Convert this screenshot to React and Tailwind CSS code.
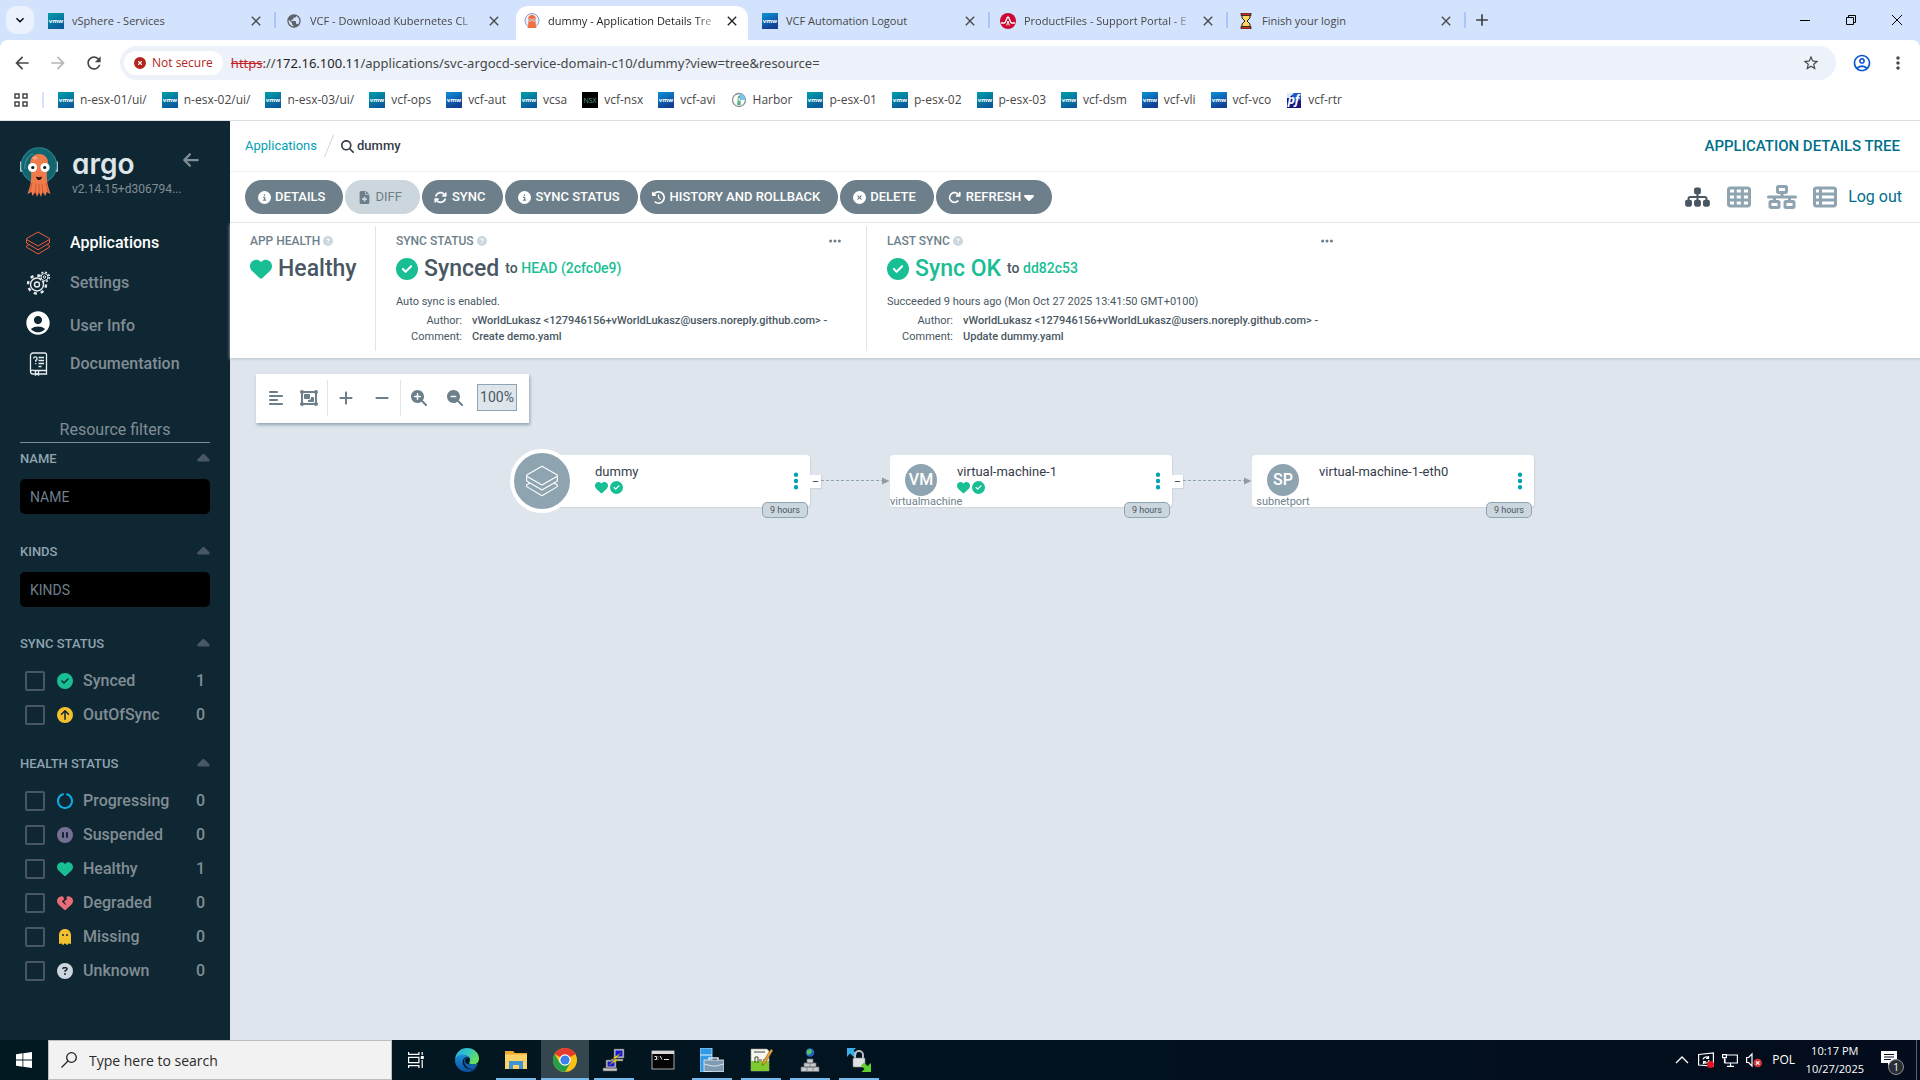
import React from "react";
import {
  FaAlignLeft,
  FaArrowLeft,
  FaArrowRotateRight,
  FaArrowsRotate,
  FaCaretDown,
  FaCaretUp,
  FaCircleArrowUp,
  FaCircleCheck,
  FaCircleInfo,
  FaCircleNotch,
  FaCirclePause,
  FaCircleQuestion,
  FaCircleXmark,
  FaClockRotateLeft,
  FaEllipsis,
  FaEllipsisVertical,
  FaFileMedical,
  FaGhost,
  FaHeart,
  FaHeartCrack,
  FaMagnifyingGlass,
  FaMagnifyingGlassMinus,
  FaMagnifyingGlassPlus,
  FaMinus,
  FaNetworkWired,
  FaObjectGroup,
  FaPlus,
  FaSitemap,
  FaTableCells,
  FaTableList,
} from "react-icons/fa6";
import {
  MdAccountCircle,
  MdAdd,
  MdArrowBack,
  MdArrowForward,
  MdClose,
  MdKeyboardArrowDown,
  MdMoreVert,
  MdOutlineAccountCircle,
  MdPublic,
  MdRefresh,
  MdStarOutline,
} from "react-icons/md";

const VmwIcon = ({ from = "#00a0a8", to = "#0a5c9c" }) => (
  <svg className="w-4 h-4 shrink-0" viewBox="0 0 16 16" aria-hidden="true">
    <defs>
      <linearGradient id={`vmw${from.slice(1)}`} x1="0" y1="0" x2="0.4" y2="1">
        <stop offset="0" stopColor={from} />
        <stop offset="1" stopColor={to} />
      </linearGradient>
    </defs>
    <rect width="16" height="16" fill={`url(#vmw${from.slice(1)})`} />
    <text x="8" y="10" textAnchor="middle" fontSize="6" fontWeight="700" fill="#fff" fontFamily="Open Sans, sans-serif">
      vmw
    </text>
  </svg>
);

const VmwBlue = () => <VmwIcon from="#0b93d8" to="#123f93" />;

const NsxIcon = () => (
  <svg className="w-4 h-4 shrink-0" viewBox="0 0 16 16" aria-hidden="true">
    <rect width="16" height="16" fill="#000" />
    <text x="8" y="11" textAnchor="middle" fontSize="7" fill="#5f9f8c" fontFamily="Open Sans, sans-serif">
      NSX
    </text>
  </svg>
);

const HarborIcon = () => (
  <svg className="w-4 h-4 shrink-0" viewBox="0 0 16 16" aria-hidden="true">
    <circle cx="8" cy="8" r="6.5" fill="#fff" stroke="#8a8f94" strokeWidth="1.3" />
    <path d="M8 1.5a6.5 6.5 0 0 1 6.5 6.5L8 8z" fill="#7cc4ee" />
    <path d="M7 4h2l1 9H6z" fill="#5fb58a" />
    <path d="M7.5 6.5h1.5v2H7.5z" fill="#fff" />
  </svg>
);

const PfIcon = () => (
  <svg className="w-4 h-4 shrink-0" viewBox="0 0 16 16" aria-hidden="true">
    <rect x="1" y="1" width="14" height="15" fill="#17177f" />
    <path d="M6 1h9v7l-9 3z" fill="#1f56c4" />
    <path d="M1 1h7L3 6H1z" fill="#dfe6f5" />
    <text x="7.5" y="12" textAnchor="middle" fontSize="12" fontWeight="700" fontStyle="italic" fill="#fff" fontFamily="Open Sans, sans-serif">
      pf
    </text>
  </svg>
);

const Octopus = ({ className }) => (
  <svg className={className} viewBox="0 0 38 50" aria-hidden="true">
    <rect x="0" y="14" width="4" height="11" rx="1.5" fill="#b7cbd9" />
    <rect x="34" y="14" width="4" height="11" rx="1.5" fill="#b7cbd9" />
    <circle cx="19" cy="18.5" r="17.6" fill="#10656f" stroke="#2a7e88" strokeWidth="1.2" />
    <path d="M5 22c-1-8 4-14 8-15" fill="none" stroke="#4b9aa1" strokeWidth="1" />
    <path
      d="M19 7c-7 0-9.500 6-8.500 12 .6 4 1 8 .5 14-.3 5-2 9-3.500 14l4-2 1 4 3-4 1.500 5 2-5 2 5 1.500-5 3 4 1-4 4 2c-1.500-5-3.200-9-3.500-14-.5-6-.1-10 .5-14C29.500 13 26 7 19 7z"
      fill="#ef7b4d"
    />
    <path d="M12 36l-2 9M16 37l-1 9M19 37v10M22 37l1 9M26 36l2 9" stroke="#d6562e" strokeWidth="1" fill="none" />
    <ellipse cx="15" cy="11" rx="2.500" ry="1.500" fill="#f8a585" />
    <circle cx="12.500" cy="20.500" r="4.600" fill="#fff" />
    <circle cx="25" cy="20.500" r="4.600" fill="#fff" />
    <circle cx="12.800" cy="20.500" r="1.600" fill="#0e1b22" />
    <circle cx="24.700" cy="20.500" r="1.600" fill="#0e1b22" />
    <path d="M16 29.500q3 1.600 6 0q-.6 3.600-3 3.600t-3-3.600z" fill="#2b0f0a" />
  </svg>
);

const ArgoFavicon = () => (
  <svg className="w-4 h-4 shrink-0" viewBox="0 0 16 16" aria-hidden="true">
    <circle cx="8" cy="7.500" r="7" fill="#eef1fa" stroke="#8d97c9" strokeWidth="1" />
    <path d="M8 2c-3 0-4.200 2.500-3.800 5 .3 2 .2 5-.7 8h9c-.9-3-1-6-.7-8C12.200 4.500 11 2 8 2z" fill="#ef6f42" />
    <circle cx="6" cy="7" r="1.600" fill="#fff" />
    <circle cx="10" cy="7" r="1.600" fill="#fff" />
    <circle cx="6" cy="7" r=".7" fill="#222" />
    <circle cx="10" cy="7" r=".7" fill="#222" />
  </svg>
);

const BroadcomIcon = () => (
  <svg className="w-4 h-4 shrink-0" viewBox="0 0 16 16" aria-hidden="true">
    <circle cx="8" cy="8" r="8" fill="#cc092f" />
    <path d="M1 10h3.500C6 10 6.500 4 8 4s2 6 3.500 6H15" fill="none" stroke="#fff" strokeWidth="1.400" />
    <path d="M6.800 12.500L8 8l1.200 4.500" fill="none" stroke="#fff" strokeWidth="1" />
  </svg>
);

const HourglassIcon = () => (
  <svg className="w-4 h-4 shrink-0" viewBox="0 0 16 16" aria-hidden="true">
    <path d="M4 2h8v3L9 8l3 3v3H4v-3l3-3-3-3z" fill="#ffd35c" stroke="#222" strokeWidth="1" />
    <path d="M3 0h10v2.500H3zM3 13.500h10V16H3z" fill="#c8321f" stroke="#222" strokeWidth=".8" />
  </svg>
);

const Layers = ({ className, strokeWidth = 1 }) => (
  <svg className={className} viewBox="0 0 24 24" fill="none" stroke="currentColor" strokeWidth={strokeWidth} strokeLinejoin="round" aria-hidden="true">
    <path d="M12 1L23.500 7.500v1L12 15 .5 8.500v-1z" />
    <path d="M.5 8.500v3.500L12 18.800 23.500 12V8.500" />
    <path d="M3 13.500L.5 15v1.200L12 23l11.500-6.800V15L21 13.500" />
  </svg>
);

const Gears = () => (
  <svg className="w-6 h-6" viewBox="0 0 24 24" fill="none" stroke="#e8edf0" aria-hidden="true">
    <circle cx="11" cy="13.500" r="6.500" strokeWidth="1.400" />
    <circle cx="11" cy="13.500" r="9" strokeWidth="2.400" strokeDasharray="3.200 3.870" />
    <circle cx="11" cy="13.500" r="2.500" strokeWidth="1.400" />
    <circle cx="18.500" cy="6" r="4.800" strokeWidth="1.600" strokeDasharray="2 1.770" fill="#0f2733" />
    <circle cx="18.500" cy="6" r="3.500" strokeWidth="1" />
    <circle cx="18.500" cy="6" r="1.200" strokeWidth="1" />
  </svg>
);

const DocsIcon = () => (
  <svg className="w-6 h-6" viewBox="0 0 24 24" fill="none" stroke="#e8edf0" strokeWidth="1.300" aria-hidden="true">
    <path d="M20.500 18.500V2.500a1.500 1.500 0 0 0-1.500-1.500H7a2.500 2.500 0 0 0-2.500 2.500v16A2.500 2.500 0 0 0 7 22h13.500v-3.500H7.500a2 2 0 0 0-3 1" />
    <path d="M9.500 18.500V23l1.500-1 1.500 1v-4.500" />
    <path d="M7.500 6.500a1.800 1.800 0 1 1 2.200 2v1.300M9.700 11v1.200M12.500 5.500h5.500M12.500 8.500h5.500M12.500 11.500h5.500M12.500 14.500h3" />
  </svg>
);

const tabs = [
  { title: "vSphere - Services", icon: <VmwIcon /> },
  { title: "VCF - Download Kubernetes CL", icon: <MdPublic className="w-4 h-4 shrink-0 text-[#5f6368]" />, fade: true },
  { title: "dummy - Application Details Tre", icon: <ArgoFavicon />, active: true, fade: true },
  { title: "VCF Automation Logout", icon: <VmwBlue /> },
  { title: "ProductFiles - Support Portal - E", icon: <BroadcomIcon />, fade: true },
  { title: "Finish your login", icon: <HourglassIcon /> },
];

const bookmarks = [
  ["n-esx-01/ui/", <VmwIcon />],
  ["n-esx-02/ui/", <VmwIcon />],
  ["n-esx-03/ui/", <VmwIcon />],
  ["vcf-ops", <VmwIcon />],
  ["vcf-aut", <VmwBlue />],
  ["vcsa", <VmwIcon />],
  ["vcf-nsx", <NsxIcon />],
  ["vcf-avi", <VmwBlue />],
  ["Harbor", <HarborIcon />],
  ["p-esx-01", <VmwIcon />],
  ["p-esx-02", <VmwIcon />],
  ["p-esx-03", <VmwIcon />],
  ["vcf-dsm", <VmwIcon />],
  ["vcf-vli", <VmwBlue />],
  ["vcf-vco", <VmwBlue />],
  ["vcf-rtr", <PfIcon />],
];

const Tab = ({ tab, last }) => (
  <div
    className={`relative flex items-center w-[238px] h-10 pt-0.5 ${tab.active ? "text-[#1f1f1f]" : "text-[#474747]"}`}
  >
    {tab.active && <div className="absolute left-0.5 right-1 top-1.5 bottom-0 rounded-t-xl bg-white" />}
    <div className="relative flex items-center w-full pl-2.5 pr-3">
      {tab.icon}
      <span
        className={`ml-2 w-[172px] text-[11px] leading-4 whitespace-nowrap ${
          tab.fade ? "[mask-image:linear-gradient(to_right,black_86%,transparent)]" : ""
        }`}
      >
        {tab.title}
      </span>
      <button className="ml-1" aria-label={`Close ${tab.title}`}>
        <MdClose className="w-4 h-4" />
      </button>
    </div>
    {!last && <span className="absolute right-0 top-3 w-0.5 h-4 bg-[#a8c7fa]" />}
  </div>
);

const Browser = () => (
  <header className="font-['Open_Sans',sans-serif] bg-[#d3e3fd]">
    <div className="flex items-center h-10">
      <button className="ml-1.5 w-7 h-7 rounded-[10px] bg-[#ebf1fd] flex items-center justify-center" aria-label="Search tabs">
        <MdKeyboardArrowDown className="w-4 h-4" />
      </button>
      <div className="flex ml-1">
        {tabs.map((tab, i) => (
          <Tab key={tab.title} tab={tab} last={tab.active || tabs[i + 1]?.active} />
        ))}
      </div>
      <button className="ml-1.5 text-[#3c4043]" aria-label="New tab">
        <MdAdd className="w-5 h-5" />
      </button>
      <div className="ml-auto flex">
        <button className="w-[46px] h-10 flex items-center justify-center" aria-label="Minimize">
          <svg className="w-2.5 h-2.5" viewBox="0 0 10 10" stroke="#000">
            <path d="M0 5.500h10" />
          </svg>
        </button>
        <button className="w-[46px] h-10 flex items-center justify-center" aria-label="Restore">
          <svg className="w-2.5 h-2.5" viewBox="0 0 10 10" stroke="#000" fill="none">
            <path d="M.5 2.500h7v7h-7zM2.500 2.500v-2h7v7h-2" />
          </svg>
        </button>
        <button className="w-[46px] h-10 flex items-center justify-center" aria-label="Close">
          <svg className="w-2.5 h-2.5" viewBox="0 0 10 10" stroke="#000">
            <path d="M0 0l10 10M10 0L0 10" />
          </svg>
        </button>
      </div>
    </div>
    <div className="bg-white rounded-t-lg border-b border-[#dcdfe3]">
      <div className="flex items-center h-[46px] text-[#474747]">
        <button className="ml-3" aria-label="Back">
          <MdArrowBack className="w-5 h-5" />
        </button>
        <button className="ml-4 text-[#b4b6b8]" aria-label="Forward">
          <MdArrowForward className="w-5 h-5" />
        </button>
        <button className="ml-4" aria-label="Reload">
          <MdRefresh className="w-5 h-5" />
        </button>
        <div className="flex-1 flex items-center ml-4 h-[34px] rounded-full bg-[#ecf1fa] pl-1 pr-4">
          <button className="flex items-center gap-1.5 h-6 px-2.5 rounded-full bg-white text-[12px] font-medium text-[#b3261e]">
            <FaCircleXmark className="w-3 h-3" />
            Not secure
          </button>
          <div className="ml-2 font-['Noto_Sans',sans-serif] text-[13px] leading-5">
            <span className="line-through text-[#c5221f]">https</span>://
            <span className="text-[#1f1f1f]">172.16.100.11</span>
            /applications/svc-argocd-service-domain-c10/dummy?view=tree&amp;resource=
          </div>
          <button className="ml-auto" aria-label="Bookmark this tab">
            <MdStarOutline className="w-[18px] h-[18px]" />
          </button>
        </div>
        <button className="ml-4 text-[#0b57d0]" aria-label="Profile">
          <MdOutlineAccountCircle className="w-5 h-5" />
        </button>
        <button className="ml-4 mr-3" aria-label="Menu">
          <MdMoreVert className="w-5 h-5" />
        </button>
      </div>
      <nav className="flex items-center h-[34px] pb-1.5 text-[12px] leading-4 text-[#474747]">
        <button className="ml-3.5" aria-label="Apps">
          <svg className="w-3.5 h-3.5" viewBox="0 0 14 14" fill="none" stroke="currentColor" strokeWidth="1.500">
            <path d="M1 1h4v4H1zM9 1h4v4H9zM1 9h4v4H1zM9 9h4v4H9z" />
          </svg>
        </button>
        <span className="w-0.5 h-4 ml-3.5 mr-3.5 bg-[#d3e3fd]" />
        <div className="flex gap-[15px]">
          {bookmarks.map(([name, icon]) => (
            <a key={name} href="#" className="flex items-center gap-1.5">
              {icon}
              {name}
            </a>
          ))}
        </div>
      </nav>
    </div>
  </header>
);

const FilterTitle = ({ children }) => (
  <div className="flex items-center justify-between h-5 text-[13px] font-medium text-[#8fa4b1]">
    {children}
    <FaCaretUp className="w-[13px] h-5 text-[#495763]" />
  </div>
);

const FilterRow = ({ label, count, icon }) => (
  <label className="flex items-center h-[34px] pl-[5px] pr-[5px] text-[16px] font-medium text-[#818d94]">
    <input type="checkbox" className="appearance-none w-5 h-5 border-2 border-[#495763] rounded-xs" />
    <span className="ml-[11px] mr-2.5 w-[17px] flex justify-center">{icon}</span>
    <span className="flex-1">{label}</span>
    {count}
  </label>
);

const Sidebar = () => (
  <aside className="w-[230px] shrink-0 bg-[#0f2733] px-5 text-[#818d94]">
    <div className="flex pt-[26px] h-[102px]">
      <Octopus className="w-[38px] h-[50px] shrink-0" />
      <div className="ml-3.5 w-[110px]">
        <div className="font-['Inter',sans-serif] [font-feature-settings:'cv11'] text-[28px] leading-[34px] font-semibold text-[#dee6eb]">
          argo
        </div>
        <div className="text-[12px] leading-4 whitespace-nowrap">v2.14.15+d306794...</div>
      </div>
      <button className="self-start mt-1" aria-label="Collapse sidebar">
        <FaArrowLeft className="w-[18px] h-[18px]" />
      </button>
    </div>
    <nav className="text-[16px] font-medium">
      <a href="#" className="flex items-center h-10 text-white">
        <span className="w-9 flex justify-center mr-3.5">
          <Layers className="w-6 h-6 text-[#ef5b3c]" />
        </span>
        Applications
      </a>
      <a href="#" className="flex items-center h-10">
        <span className="w-9 flex justify-center mr-3.5">
          <Gears />
        </span>
        Settings
      </a>
      <a href="#" className="flex items-center h-[45px]">
        <span className="w-9 flex justify-center mr-3.5 pb-1.5">
          <MdAccountCircle className="w-7 h-7 text-white" />
        </span>
        User Info
      </a>
      <a href="#" className="flex items-center h-8">
        <span className="w-9 flex justify-center mr-3.5">
          <DocsIcon />
        </span>
        Documentation
      </a>
    </nav>
    <div className="mt-10 pb-0.5 border-b border-[#818d94] text-center text-[16px] leading-5">Resource filters</div>
    <div className="pt-1.5">
      <FilterTitle>NAME</FilterTitle>
      <input
        aria-label="Name"
        placeholder="NAME"
        className="mt-2.5 w-full h-[35px] rounded-[5px] bg-black px-2.5 text-[14px] placeholder:text-[#6d7f8b]"
      />
    </div>
    <div className="pt-7">
      <FilterTitle>KINDS</FilterTitle>
      <input
        aria-label="Kinds"
        placeholder="KINDS"
        className="mt-2.5 w-full h-[35px] rounded-[5px] bg-black px-2.5 text-[14px] placeholder:text-[#6d7f8b]"
      />
    </div>
    <div className="pt-[27px]">
      <FilterTitle>SYNC STATUS</FilterTitle>
      <div className="pt-2.5">
        <FilterRow label="Synced" count="1" icon={<FaCircleCheck className="text-[#18be94]" />} />
        <FilterRow label="OutOfSync" count="0" icon={<FaCircleArrowUp className="text-[#f4c030]" />} />
      </div>
    </div>
    <div className="pt-[22px]">
      <FilterTitle>HEALTH STATUS</FilterTitle>
      <div className="pt-2.5">
        <FilterRow label="Progressing" count="0" icon={<FaCircleNotch className="text-[#0dadea]" />} />
        <FilterRow label="Suspended" count="0" icon={<FaCirclePause className="text-[#766f94]" />} />
        <FilterRow label="Healthy" count="1" icon={<FaHeart className="text-[#18be94]" />} />
        <FilterRow label="Degraded" count="0" icon={<FaHeartCrack className="text-[#e96d76]" />} />
        <FilterRow label="Missing" count="0" icon={<FaGhost className="text-[#f4c030]" />} />
        <FilterRow label="Unknown" count="0" icon={<FaCircleQuestion className="text-[#ccd6dd]" />} />
      </div>
    </div>
  </aside>
);

const ActionButton = ({ icon, children, disabled }) => (
  <button
    disabled={disabled}
    className={`flex items-center gap-1 h-[34px] pl-3 pr-[18px] rounded-full text-[13px] ${
      disabled ? "bg-[#ccd6dd] text-[#6d7f8b]" : "bg-[#6d7f8b] text-white font-medium"
    }`}
  >
    <span className="w-3.5 flex justify-center">{icon}</span>
    {children}
  </button>
);

const StatusTitle = ({ children, menu }) => (
  <div className="flex items-center h-[18px] text-[12px] font-medium text-[#6d7f8b]">
    {children}
    <FaCircleQuestion className="ml-[3px] w-2.5 h-2.5 text-[#ccd6dd]" />
    {menu && (
      <button className="ml-auto" aria-label="More">
        <FaEllipsis className="w-3.5 h-3.5" />
      </button>
    )}
  </div>
);

const CommitInfo = ({ summary, author, comment }) => (
  <div className="pt-1.5 text-[11px] leading-4">
    <div>{summary}</div>
    <dl className="grid grid-cols-[66px_auto] gap-x-2.5 pt-[3px]">
      <dt className="text-right">Author:</dt>
      <dd className="font-medium whitespace-nowrap">{author}</dd>
      <dt className="text-right">Comment:</dt>
      <dd className="font-medium">{comment}</dd>
    </dl>
  </div>
);

const author = "vWorldLukasz <127946156+vWorldLukasz@users.noreply.github.com> -";

const Toolbar = () => (
  <>
    <div className="flex items-center justify-between h-[51px] pl-[15px] pr-5 border-b border-[#eceff1] bg-white">
      <div className="flex items-center text-[13px]">
        <a href="#" className="text-[#00a2b3]">
          Applications
        </a>
        <svg className="w-2.5 h-[22px] mx-[7px]" viewBox="0 0 10 22" stroke="#ccd6dd" aria-hidden="true">
          <path d="M.5 22L9.500 0" />
        </svg>
        <FaMagnifyingGlass className="w-[13px] h-[13px] mr-[3px] text-[#363c4a]" />
        <span className="font-medium text-[#363c4a]">dummy</span>
      </div>
      <h1 className="text-[15px] font-medium text-[#006f8a]">APPLICATION DETAILS TREE</h1>
    </div>
    <div className="flex items-center h-[51px] pl-[15px] pr-[18px] border-b border-[#eceff1] bg-white">
      <div className="flex gap-0.5">
        <ActionButton icon={<FaCircleInfo />}>DETAILS</ActionButton>
        <ActionButton disabled icon={<FaFileMedical />}>
          DIFF
        </ActionButton>
        <ActionButton icon={<FaArrowsRotate />}>SYNC</ActionButton>
        <ActionButton icon={<FaCircleInfo />}>SYNC STATUS</ActionButton>
        <ActionButton icon={<FaClockRotateLeft />}>HISTORY AND ROLLBACK</ActionButton>
        <ActionButton icon={<FaCircleXmark />}>DELETE</ActionButton>
        <ActionButton icon={<FaArrowRotateRight />}>
          <span className="flex items-center">
            REFRESH <FaCaretDown className="ml-[3px] w-2.5 h-4" />
          </span>
        </ActionButton>
      </div>
      <div className="ml-auto flex items-center gap-4 text-[#8fa4b1]">
        <button aria-label="Tree view" className="text-[#495763]">
          <FaSitemap className="w-[27px] h-[22px]" />
        </button>
        <button aria-label="Pods view">
          <FaTableCells className="w-6 h-6" />
        </button>
        <button aria-label="Network view">
          <FaNetworkWired className="w-[30px] h-6" />
        </button>
        <button aria-label="List view">
          <FaTableList className="w-6 h-6" />
        </button>
        <a href="#" className="-ml-[5px] text-[16px] text-[#006f8a]">
          Log out
        </a>
      </div>
    </div>
  </>
);

const StatusPanel = () => (
  <section className="relative z-10 flex h-[135px] pt-[3px] pb-[7px] bg-white text-[#495763] shadow-[0_1px_3px_#b8c4cc]">
    <div className="w-[146px] pl-5 pt-1.5 border-r border-[#dee6eb]">
      <StatusTitle>APP HEALTH</StatusTitle>
      <div className="flex items-center gap-1.5 h-[38px] text-[23px] font-medium">
        <FaHeart className="w-[22px] h-[22px] text-[#18be94]" />
        Healthy
      </div>
    </div>
    <div className="w-[491px] pl-5 pr-6 pt-1.5 border-r border-[#dee6eb]">
      <StatusTitle menu>SYNC STATUS</StatusTitle>
      <div className="flex items-center h-[38px] text-[23px] font-medium">
        <FaCircleCheck className="w-[22px] h-[22px] mr-1.5 text-[#18be94]" />
        Synced
        <span className="ml-1.5 text-[14px] leading-5 pb-0.5">
          to{" "}
          <a href="#" className="text-[#18be94]">
            HEAD (2cfc0e9)
          </a>
        </span>
      </div>
      <CommitInfo summary="Auto sync is enabled." author={author} comment="Create demo.yaml" />
    </div>
    <div className="w-[491px] pl-5 pr-6 pt-1.5">
      <StatusTitle menu>LAST SYNC</StatusTitle>
      <div className="flex items-center h-[38px] text-[23px] font-medium text-[#18be94]">
        <FaCircleCheck className="w-[22px] h-[22px] mr-1.5" />
        Sync OK
        <span className="ml-1.5 text-[14px] leading-5 pb-0.5 text-[#495763]">
          to{" "}
          <a href="#" className="text-[#18be94]">
            dd82c53
          </a>
        </span>
      </div>
      <CommitInfo
        summary="Succeeded 9 hours ago (Mon Oct 27 2025 13:41:50 GMT+0100)"
        author={author}
        comment="Update dummy.yaml"
      />
    </div>
  </section>
);

const GraphTools = () => (
  <div className="absolute left-[26px] top-4 flex items-center h-[49px] pb-0.5 pr-3 bg-white text-[#6d7f8b] shadow-[1px_2px_3px_#8fa4b1]">
    <button className="w-10 flex justify-center" aria-label="Align">
      <FaAlignLeft className="w-4 h-4" />
    </button>
    <button className="w-[31px] pl-1" aria-label="Group nodes">
      <FaObjectGroup className="w-[18px] h-[18px]" />
    </button>
    <div className="flex items-center h-9 border-l border-r border-[#dee6eb]">
      <button className="w-9 flex justify-center" aria-label="Expand all">
        <FaPlus className="w-4 h-4" />
      </button>
      <button className="w-9 flex justify-center" aria-label="Collapse all">
        <FaMinus className="w-4 h-4" />
      </button>
    </div>
    <button className="w-9 flex justify-center" aria-label="Zoom in">
      <FaMagnifyingGlassPlus className="w-4 h-4" />
    </button>
    <button className="w-9 flex justify-center" aria-label="Zoom out">
      <FaMagnifyingGlassMinus className="w-4 h-4" />
    </button>
    <span className="ml-1 w-10 h-[27px] border border-[#8fa4b1] bg-[#dee6eb] text-[14px] leading-6 text-center text-[#495763]">
      100%
    </span>
  </div>
);

// x is relative to the left edge of the graph
const nodes = [
  { name: "dummy", x: 298, root: true, healthy: true, next: true },
  { name: "virtual-machine-1", x: 660, short: "VM", kind: "virtualmachine", healthy: true, next: true },
  { name: "virtual-machine-1-eth0", x: 1022, short: "SP", kind: "subnetport" },
];

const GraphNode = ({ node }) => (
  <div
    className="absolute top-[97px] w-[282px] h-[52px] rounded bg-white shadow-[1px_1px_1px_#ccd6dd]"
    style={{ left: node.x }}
  >
    {node.root ? (
      <div className="absolute -left-[18px] -top-1.5 w-16 h-16 rounded-full border-4 border-white bg-[#8fa4b1] flex items-center justify-center text-white">
        <Layers className="w-8 h-8" strokeWidth={0.8} />
      </div>
    ) : (
      <div className="absolute left-0 top-[9px] w-[62px] text-[#6d7f8b]">
        <div className="w-8 h-8 mx-auto rounded-full bg-[#8fa4b1] text-white text-[16px] leading-8 font-medium text-center">
          {node.short}
        </div>
        <div className="text-[11px] leading-3 text-center whitespace-nowrap">{node.kind}</div>
      </div>
    )}
    <div className="pl-[67px] pt-2 text-[13px] leading-[18px] text-[#363c4a]">
      {node.name}
      {node.healthy && (
        <div className="flex gap-0.5 text-[#18be94]">
          <FaHeart className="w-[13px] h-[13px]" />
          <FaCircleCheck className="w-[13px] h-[13px]" />
        </div>
      )}
    </div>
    <button className="absolute right-1 top-4 text-[#00a2b3]" aria-label={`${node.name} menu`}>
      <FaEllipsisVertical className="w-5 h-5" />
    </button>
    <span className="absolute right-0.5 top-[47px] px-[7px] rounded-[5px] border border-[#8fa4b1] bg-[#ccd6dd] text-[9px] leading-[14px] text-[#495763]">
      9 hours
    </span>
    {node.next && (
      <>
        <button
          className="absolute left-full top-5 w-[11px] h-[13px] bg-white flex items-center justify-center text-[#495763] shadow-[1px_1px_1px_#ccd6dd]"
          aria-label="Collapse"
        >
          <FaMinus className="w-[7px] h-[7px]" />
        </button>
        <svg className="absolute left-[293px] top-5 w-[69px] h-3" viewBox="0 0 69 12" aria-hidden="true">
          <path d="M0 5.500h62" stroke="#8fa4b1" strokeDasharray="3 2" />
          <path d="M61 2.500l7.500 3.500-7.500 3.500z" fill="#969ba0" />
        </svg>
      </>
    )}
  </div>
);

const TaskbarApp = ({ children, label, open, active }) => (
  <button
    aria-label={label}
    className={`relative w-12 h-10 flex items-center justify-center ${active ? "bg-[#34474f]" : ""}`}
  >
    <svg className="w-6 h-6" viewBox="0 0 24 24" aria-hidden="true">
      {children}
    </svg>
    {open && <span className={`absolute bottom-0 h-0.5 bg-[#76b9ed] ${active ? "inset-x-0" : "inset-x-1"}`} />}
  </button>
);

const Taskbar = () => (
  <footer className="flex items-center h-10 font-['Open_Sans',sans-serif] text-white bg-linear-to-r from-[#011a22] to-[#030c1c]">
    <button className="w-12 h-10 flex items-center justify-center" aria-label="Start">
      <svg className="w-4 h-4" viewBox="0 0 16 16" fill="#fff">
        <path d="M0 2.200L6.500 1.300V7.600H0zM7.300 1.200L16 0v7.600H7.300zM0 8.400h6.500v6.300L0 13.800zM7.300 8.400H16V16l-8.700-1.200z" />
      </svg>
    </button>
    <label className="flex items-center w-[344px] h-10 px-3 border border-[#bdbdbd] bg-[#f2f2f2]">
      <svg className="w-4 h-4 shrink-0" viewBox="0 0 16 16" fill="none" stroke="#222" strokeWidth="1.300">
        <circle cx="10.500" cy="5.500" r="4.800" />
        <path d="M7 9l-6.500 6.500" />
      </svg>
      <input
        aria-label="Search"
        placeholder="Type here to search"
        className="ml-3 w-full bg-transparent text-[14px] placeholder:text-[#2b2b2b]"
      />
    </label>
    <div className="flex gap-px">
      <button className="w-[50px] h-10 pl-4" aria-label="Task view">
        <svg className="w-4 h-4" viewBox="0 0 16 16" fill="none" stroke="#fff" strokeWidth="1.200">
          <path d="M.6 0v2.400h10.300V0M.6 5.400h10.300v5.200H.6zM.6 16v-2.400h10.300V16M14.200 0v3M14.200 8v8" />
          <path d="M12.800 4h3v3h-3z" fill="#fff" stroke="none" />
        </svg>
      </button>
      <TaskbarApp label="Edge">
        <defs>
          <linearGradient id="edgeTop" x1="0" y1="0" x2="1" y2="0.5">
            <stop offset="0" stopColor="#2aa7e0" />
            <stop offset="0.500" stopColor="#2fc3c9" />
            <stop offset="1" stopColor="#6be05a" />
          </linearGradient>
          <linearGradient id="edgeLow" x1="0" y1="0" x2="0" y2="1">
            <stop offset="0" stopColor="#1c8fdd" />
            <stop offset="1" stopColor="#0b4f9e" />
          </linearGradient>
        </defs>
        <path d="M0 11.500C.8 4.500 5.500 0 12 0c7 0 12 5 12 10.500 0 4-2.800 6-6 6-2.600 0-4.500-1-4-2 .7-1 .9-1.700.9-2.500 0-2.500-2.600-5-6.700-5C4.500 7 1.500 9 0 11.500z" fill="url(#edgeTop)" />
        <path d="M0 12c1-3 4-5.400 7.800-5.400 2.700 0 4.700.9 5.900 2.200-3.500-.5-6 1.700-6 5.200 0 4.500 3.800 7.500 8.300 7.500 2.200 0 4.500-.9 6-2.300C20 22.300 16.200 24 12 24 5.500 24 0 18.700 0 12z" fill="url(#edgeLow)" />
        <path d="M9 13c0-2.200 1.700-4 4.700-4.200.9 1 1.300 2 1.200 3.200 0 .8-.3 1.500-.9 2.500-.5 1 1.400 2 4 2 1.500 0 3-.5 4.200-1.300.8 1-.6 4-3 5.200-5 2-10.200-2.300-10.200-7.400z" fill="#0f5fae" />
        <path d="M10 12.500c.4-1.800 1.800-3 3.900-3.300.7.900 1 1.800 1 2.800 0 .8-.3 1.500-.9 2.500-.3.600.3 1.200 1.200 1.600-2.800.5-5.200-1-5.200-3.600z" fill="#011a22" />
      </TaskbarApp>
      <TaskbarApp label="File Explorer" open>
        <path d="M1 3h8l2 2h12v16H1z" fill="#f0a92c" />
        <path d="M1 6.500h22V21H1z" fill="#fdd368" />
        <path d="M5 13h14v8h-4v-4H9v4H5z" fill="#3f94d4" />
      </TaskbarApp>
      <TaskbarApp label="Chrome" open active>
        <circle cx="12" cy="12" r="12" fill="#fbc116" />
        <path d="M12 12L1.600 6A12 12 0 0 1 22.400 6z" fill="#e33b2e" />
        <path d="M1.600 6A12 12 0 0 0 12 24l5.200-9L12 12 6.800 15z" fill="#269f4b" />
        <path d="M12 6.600h10.700A12 12 0 0 0 12 0z" fill="#e33b2e" />
        <circle cx="12" cy="12" r="5.800" fill="#fff" />
        <circle cx="12" cy="12" r="4.600" fill="#3f7fec" />
      </TaskbarApp>
      <TaskbarApp label="PuTTY" open>
        <path d="M12 1h10v9H12zM9 11h12v2H9zM4 12h10v8H4zM1 20h14v3H1z" fill="#c8c8c8" stroke="#555" strokeWidth=".6" />
        <path d="M13.500 2.500h7v6h-7zM5.500 13.500h7v5h-7z" fill="#1717d8" />
        <path d="M19 5l-8 5 3 1-7 6 9-5-3-1z" fill="#ffef1f" stroke="#8a7a00" strokeWidth=".4" />
      </TaskbarApp>
      <TaskbarApp label="Command Prompt">
        <rect x="1" y="3" width="22" height="18" fill="#050505" stroke="#a8a8a8" />
        <path d="M1 3h22v3H1z" fill="#d8d8d8" />
        <path d="M13 11.500h5M3.500 8.500h2v3h-2M7 8.500v.8M7 10.700v.8M9 8l2 3.500" stroke="#e6e6e6" fill="none" />
      </TaskbarApp>
      <TaskbarApp label="Server Manager" open>
        <path d="M0 0h12v24H0z" fill="#2f9be6" stroke="#bfe0f7" strokeWidth=".8" />
        <path d="M0 7h12" stroke="#e6f3fc" />
        <path d="M9 12v-2h9v2" fill="none" stroke="#dfe6ec" strokeWidth="1.500" />
        <rect x="4" y="12" width="20" height="11.500" fill="#7f9bb3" stroke="#e6edf2" strokeWidth=".8" />
        <path d="M4 16l8 2h4l8-2" fill="none" stroke="#d8e2ea" />
      </TaskbarApp>
      <TaskbarApp label="Notepad++" open>
        <path d="M2 1h16l2 2v20H2z" fill="#f4f7ea" stroke="#999" strokeWidth=".6" />
        <path d="M2 13h18v10H2z" fill="#7fcb2f" />
        <path d="M5 4h11M6 15V9h3v6M10 12h3M14 12h3" stroke="#444" fill="none" />
        <path d="M22 1l2 1.500-8 13-3 2 .8-3.500z" fill="#e8a33a" stroke="#6b3f12" strokeWidth=".5" />
      </TaskbarApp>
      <TaskbarApp label="Network Scanner" open>
        <circle cx="12" cy="4.500" r="4.300" fill="#1f63c9" />
        <path d="M9 2l4-1 1 3-3 3-2-1z" fill="#5cc552" />
        <path d="M9 11h6v4H9zM6 15h12v4H6zM3 19h18v4.500H3z" fill="#c6cacc" stroke="#6a6f73" strokeWidth=".7" />
        <path d="M12 15v4M9 19v4.500M15 19v4.500" stroke="#6a6f73" strokeWidth=".7" />
      </TaskbarApp>
      <TaskbarApp label="WinSCP" open>
        <path d="M0 0h9L6.500 2.500 10 6l-3 3-4-3.500L0 9z" fill="#39aee6" />
        <path d="M8 10V7a4 4 0 0 1 8 0v3" fill="none" stroke="#b9bdc0" strokeWidth="2" />
        <rect x="6" y="10" width="12" height="9" rx="1" fill="#dfe2e4" stroke="#888" strokeWidth=".6" />
        <path d="M24 24h-9.500l3-3-3.500-3.500 3-3 3.500 3.500 3.500-3z" fill="#5fd02f" />
      </TaskbarApp>
    </div>
    <div className="ml-auto flex items-center gap-2 text-[11px] leading-[18px]">
      <svg className="w-4 h-4" viewBox="0 0 16 16" fill="none" stroke="#fff" strokeWidth="1.300">
        <path d="M2 11l6-6 6 6" />
      </svg>
      <svg className="w-4 h-4" viewBox="0 0 16 16" fill="none" stroke="#fff" strokeWidth="1.200">
        <path d="M.6 2.500L15.400 1v13L.6 13z" />
        <path d="M5 7.500a3.200 3.200 0 0 1 5.500-1.500M10.500 4v2.500H8M11 8a3.200 3.200 0 0 1-5.500 2M5.500 12V9.500H8" />
        <circle cx="12.500" cy="12.500" r="3.500" fill="#e81123" stroke="none" />
      </svg>
      <svg className="w-4 h-4" viewBox="0 0 16 16" fill="none" stroke="#fff" strokeWidth="1.200">
        <path d="M5 3h10.400v8H3V7M8.500 11v3.400M5 14.400h7M.6 2.600h3.800v3H.6zM2.500 5.600V11" />
      </svg>
      <svg className="w-4 h-4" viewBox="0 0 16 16" fill="none" stroke="#fff" strokeWidth="1.200">
        <path d="M.6 5.500h2L6 2v12l-3.400-3.500h-2z" />
        <circle cx="11.700" cy="11" r="4.300" fill="#d13438" stroke="none" />
        <path d="M10 9.300l3.400 3.400M13.400 9.300L10 12.700" />
      </svg>
      <span className="w-7 text-center text-[12px]">POL</span>
      <div className="text-center">
        <div>10:17 PM</div>
        <div>10/27/2025</div>
      </div>
      <button className="relative w-8 h-10 ml-1 flex items-center justify-start pl-1" aria-label="Notifications">
        <svg className="w-6 h-6" viewBox="0 0 24 24">
          <path d="M1 3h16v12h-6l-3 3v-3H1z" fill="#fff" />
          <path d="M4 6.500h10M4 9h10M4 11.500h7" stroke="#030c1c" />
        </svg>
        <span className="absolute left-3 top-[19px] w-4 h-4 rounded-full border border-[#8a8f94] bg-[#2b2f35] text-[10px] leading-[14px] text-center">
          1
        </span>
      </button>
      <span className="w-px h-10 mr-[3px] bg-[#5b626c]" />
    </div>
  </footer>
);

export default function App() {
  return (
    <div className="min-h-screen flex flex-col font-['Roboto',sans-serif]">
      <Browser />
      <div className="flex-1 flex">
        <Sidebar />
        <main className="flex-1 min-w-0 flex flex-col">
          <Toolbar />
          <StatusPanel />
          <section className="relative flex-1 bg-[#dee5ec]">
            <GraphTools />
            {nodes.map((node) => (
              <GraphNode key={node.name} node={node} />
            ))}
          </section>
        </main>
      </div>
      <Taskbar />
    </div>
  );
}
